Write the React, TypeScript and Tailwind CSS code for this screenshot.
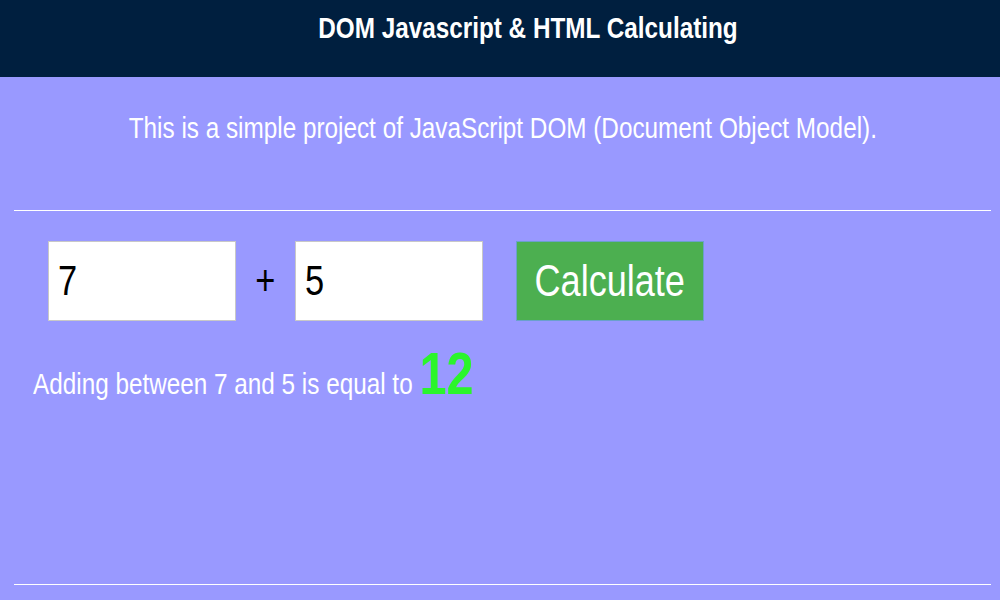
import React from "react";

export default function App() {
  return (
    <div className="min-h-screen bg-[#9999ff] font-['Liberation_Sans',Arial,sans-serif] overflow-hidden">
      <header className="h-[77px] bg-[#001f3f] pt-[13px] pl-[55px] text-center">
        <h1 className="text-[30px] leading-none font-bold text-white">
          <span className="inline-block scale-x-[0.81] origin-center whitespace-nowrap">
            DOM Javascript &amp; HTML Calculating
          </span>
        </h1>
      </header>
      <p className="mt-[36px] pl-[6px] text-center text-[30px] leading-none text-white">
        <span className="inline-block scale-x-[0.81] origin-center whitespace-nowrap">
          This is a simple project of JavaScript DOM (Document Object Model).
        </span>
      </p>
      <div className="mt-[67px] ml-[14px] mr-[9px] h-px bg-white" />
      <div className="mt-[30px] ml-[48px] flex items-center">
        <div className="w-[188px] h-[80px] border border-[#c8c8c8] bg-white pl-[9px] flex items-center">
          <span className="inline-block scale-x-[0.82] origin-left text-[42px] leading-none text-black">7</span>
        </div>
        <span className="w-[59px] text-center text-[42px] leading-none text-black">
          <span className="inline-block scale-x-[0.82] origin-center">+</span>
        </span>
        <div className="w-[188px] h-[80px] border border-[#c8c8c8] bg-white pl-[9px] flex items-center">
          <span className="inline-block scale-x-[0.82] origin-left text-[42px] leading-none text-black">5</span>
        </div>
        <button className="ml-[33px] w-[188px] h-[80px] border border-[#6aa0cc] bg-[#4caf50] text-[44px] leading-none text-white font-['Liberation_Sans',Arial,sans-serif]">
          <span className="inline-block scale-x-[0.82] origin-center whitespace-nowrap">Calculate</span>
        </button>
      </div>
      <div className="mt-[23px] ml-[33px] w-max flex items-baseline leading-none text-white scale-x-[0.81] origin-left whitespace-nowrap">
        <span className="text-[30px]">Adding between 7 and 5 is equal to&nbsp;</span>
        <span className="text-[60px] font-bold text-[#2bf52b]">12</span>
      </div>
      <div className="mt-[180px] ml-[14px] mr-[9px] h-px bg-white" />
    </div>
  );
}
